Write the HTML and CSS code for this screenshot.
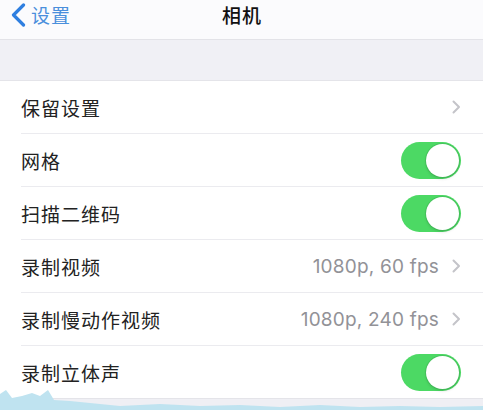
FILE: index.html
```html
<!DOCTYPE html>
<html lang="zh-CN">
<head>
<meta charset="utf-8">
<title>相机</title>
<link rel="stylesheet" href="styles.css">
</head>
<body>
<div class="screen">
  <header class="nav">
    <a class="back">
      <svg class="back-chev" width="17" height="24" viewBox="0 0 17 24"><path d="M13.5 2 L3.5 12 L13.5 22" fill="none" stroke="#2f7fe0" stroke-width="3.2" stroke-linecap="round" stroke-linejoin="round"/></svg>
      <span>设置</span>
    </a>
    <h1 class="title">相机</h1>
  </header>
  <div class="band"></div>
  <ul class="list">
    <li class="row"><span class="label">保留设置</span><span class="right"><svg class="chev" width="9" height="14" viewBox="0 0 9 14"><path d="M1.5 1.5 L7 7 L1.5 12.5" fill="none" stroke="#c4c4c9" stroke-width="2" stroke-linecap="round" stroke-linejoin="round"/></svg></span></li>
    <li class="row"><span class="label">网格</span><span class="toggle"><span class="knob"></span></span></li>
    <li class="row"><span class="label">扫描二维码</span><span class="toggle"><span class="knob"></span></span></li>
    <li class="row"><span class="label">录制视频</span><span class="right"><span class="value">1080p, 60 fps</span><svg class="chev" width="9" height="14" viewBox="0 0 9 14"><path d="M1.5 1.5 L7 7 L1.5 12.5" fill="none" stroke="#c4c4c9" stroke-width="2" stroke-linecap="round" stroke-linejoin="round"/></svg></span></li>
    <li class="row"><span class="label">录制慢动作视频</span><span class="right"><span class="value">1080p, 240 fps</span><svg class="chev" width="9" height="14" viewBox="0 0 9 14"><path d="M1.5 1.5 L7 7 L1.5 12.5" fill="none" stroke="#c4c4c9" stroke-width="2" stroke-linecap="round" stroke-linejoin="round"/></svg></span></li>
    <li class="row last"><span class="label">录制立体声</span><span class="toggle"><span class="knob"></span></span></li>
  </ul>
  <div class="footer-band"></div>
  <svg class="wave" width="483" height="30" viewBox="0 0 483 30"><path d="M0 14 L6 10 L12 18 L22 16 L32 13 L40 16 L48 10 L54 20 L70 21 L100 24 L120 26 L160 24 L200 26 L240 25 L280 27 L320 25 L360 27 L400 26 L440 27 L483 26 L483 30 L0 30 Z" fill="#bfe3f0"/></svg>
</div>
</body>
</html>
```

FILE: styles.css
```css
* { box-sizing: border-box; margin: 0; padding: 0; }
html, body { width: 483px; height: 410px; overflow: hidden; }
body {
  background: #efeff4;
  font-family: "Noto Sans CJK SC", "Noto Sans", sans-serif;
  color: #1f1f1f;
}
.screen { position: relative; width: 483px; height: 410px; }
.nav {
  height: 40px;
  background: #fbfbfd;
  border-bottom: 1px solid #e3e3e8;
  display: flex;
  align-items: center;
  justify-content: center;
  position: relative;
}
.back {
  position: absolute;
  left: 10px;
  top: 3px;
  display: flex;
  align-items: center;
  gap: 4px;
  color: #4a8fdc;
  font-size: 19px;
  letter-spacing: 1px;
  line-height: 24px;
}
.title {
  font-size: 19px;
  font-weight: 500;
  letter-spacing: 1px;
  line-height: 22px;
  margin-top: -10px;
  margin-left: 1px;
  color: #111;
}
.band { height: 41px; background: #f0f0f5; border-bottom: 1px solid #e4e4e9; }
.list { list-style: none; background: #fff; padding-left: 21px; }
.row {
  height: 53px;
  display: flex;
  align-items: center;
  justify-content: space-between;
  padding-right: 22px;
  border-bottom: 1px solid #ebebef;
}
.row.last { border-bottom: 1px solid #e4e4e9; }
.label { font-size: 19px; letter-spacing: 1px; color: #222; }
.right { display: flex; align-items: center; gap: 13px; }
.value { font-family: "Inter", "Noto Sans", sans-serif; font-size: 19px; letter-spacing: 0.2px; color: #929297; }
.chev { display: block; }
.toggle {
  width: 60px;
  height: 37px;
  border-radius: 19px;
  background: #4cd964;
  display: flex;
  align-items: center;
  justify-content: flex-end;
  padding-right: 2px;
}
.knob {
  width: 33px;
  height: 33px;
  border-radius: 50%;
  background: #fff;
  box-shadow: 0 0 0 1px rgba(60, 160, 80, 0.35), 0 2px 3px rgba(0,0,0,0.12);
}
.footer-band { height: 12px; background: #efeff4; }
.wave { position: absolute; left: 0; bottom: 0; }
```
